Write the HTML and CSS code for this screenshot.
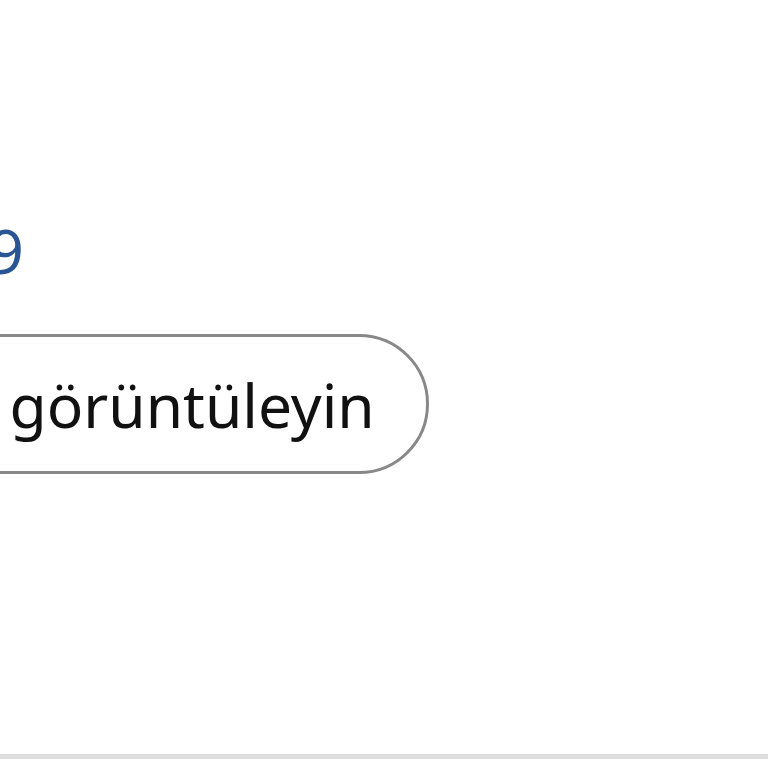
FILE: index.html
```html
<!DOCTYPE html>
<html lang="tr">
<head>
<meta charset="utf-8">
<link rel="stylesheet" href="styles.css">
</head>
<body>
<div class="page">
  <div class="price-row"><span class="price">19</span></div>
  <div class="btn-row"><a class="pill">Tümünü görüntüleyin</a></div>
  <div class="spacer"></div>
  <hr class="divider">
</div>
</body>
</html>
```
FILE: styles.css
```css
html, body { margin: 0; padding: 0; background: #fff; }
body { width: 768px; height: 768px; overflow: hidden; font-family: "Noto Sans", "DejaVu Sans", sans-serif; }
.page { display: flex; flex-direction: column; align-items: flex-end; width: 768px; padding-top: 210px; }
.price-row, .btn-row { align-self: flex-start; }
.price-row { margin-left: -47px; height: 80px; display: flex; align-items: center; }
.price { color: #2a5595; font-size: 62px; line-height: 80px; }
.btn-row { margin-top: 44px; margin-left: -306px; }
.pill { display: inline-flex; align-items: center; height: 134px; padding: 0 51px 0 60px; border: 3px solid #888; border-radius: 70px; font-size: 60.5px; color: #111; box-sizing: content-box; }
.spacer { height: 280px; }
.divider { align-self: stretch; margin: 0; border: 0; height: 5px; background: #ddd; }
```
